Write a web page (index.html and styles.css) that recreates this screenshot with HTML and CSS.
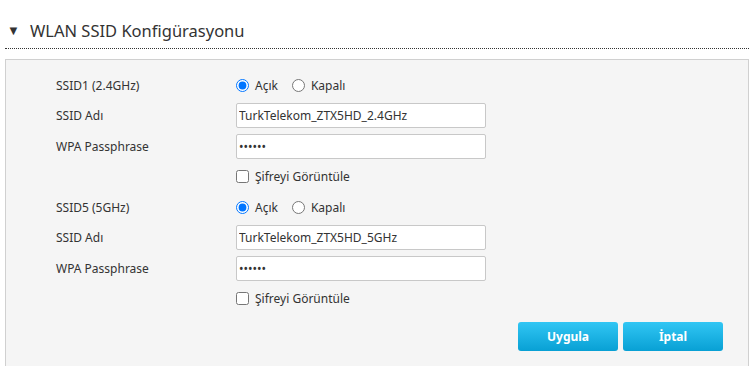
FILE: index.html
```html
<!DOCTYPE html>
<html lang="tr">
<head>
    <meta charset="UTF-8">
    <meta name="viewport" content="width=device-width, initial-scale=1.0">
    <title>WLAN SSID Konfigürasyonu</title>
    <link rel="stylesheet" href="styles.css">
</head>
<body>
    <div class="wlan-page">
        <h2 class="wlan-title"><span class="wlan-arrow">&#9660;</span>WLAN SSID Konfigürasyonu</h2>
        <form class="wlan-panel">
            <div class="wlan-row">
                <label class="wlan-label">SSID1 (2.4GHz)</label>
                <div class="wlan-field">
                    <label class="wlan-radio"><input type="radio" name="ssid1" checked>Açık</label>
                    <label class="wlan-radio"><input type="radio" name="ssid1">Kapalı</label>
                </div>
            </div>
            <div class="wlan-row">
                <label class="wlan-label" for="ssidName1">SSID Adı</label>
                <div class="wlan-field"><input class="wlan-input" id="ssidName1" type="text" value="TurkTelekom_ZTX5HD_2.4GHz"></div>
            </div>
            <div class="wlan-row">
                <label class="wlan-label" for="pass1">WPA Passphrase</label>
                <div class="wlan-field"><input class="wlan-input" id="pass1" type="password" value="123456"></div>
            </div>
            <div class="wlan-row">
                <span class="wlan-label"></span>
                <div class="wlan-field"><label class="wlan-check"><input type="checkbox">Şifreyi Görüntüle</label></div>
            </div>

            <div class="wlan-row">
                <label class="wlan-label">SSID5 (5GHz)</label>
                <div class="wlan-field">
                    <label class="wlan-radio"><input type="radio" name="ssid5" checked>Açık</label>
                    <label class="wlan-radio"><input type="radio" name="ssid5">Kapalı</label>
                </div>
            </div>
            <div class="wlan-row">
                <label class="wlan-label" for="ssidName5">SSID Adı</label>
                <div class="wlan-field"><input class="wlan-input" id="ssidName5" type="text" value="TurkTelekom_ZTX5HD_5GHz"></div>
            </div>
            <div class="wlan-row">
                <label class="wlan-label" for="pass5">WPA Passphrase</label>
                <div class="wlan-field"><input class="wlan-input" id="pass5" type="password" value="123456"></div>
            </div>
            <div class="wlan-row">
                <span class="wlan-label"></span>
                <div class="wlan-field"><label class="wlan-check"><input type="checkbox">Şifreyi Görüntüle</label></div>
            </div>

            <div class="wlan-buttons">
                <button type="button" class="wlan-btn">Uygula</button>
                <button type="button" class="wlan-btn">İptal</button>
            </div>
        </form>
    </div>
</body>
</html>
```

FILE: styles.css
```css
body {
    margin: 0;
    background-color: #fff;
    color: #333;
    font-family: "Noto Sans", "Open Sans", sans-serif;
    font-size: 12px;
    overflow: hidden;
}
.wlan-page {
    margin: 0 2px 0 5px;
}
.wlan-title {
    margin: 0;
    padding: 19px 0 6px 2px;
    border-bottom: 1px dotted #333;
    font-size: 16.5px;
    font-weight: normal;
    line-height: 23px;
    color: #333;
}
.wlan-arrow {
    display: inline-block;
    width: 23px;
    font-size: 13px;
    vertical-align: top;
}
.wlan-panel {
    box-sizing: border-box;
    height: 307px;
    margin-top: 10px;
    padding: 10px 25px 0 50px;
    background-color: #f5f5f5;
    border: 1px solid #d0d0d0;
    border-bottom: 0;
}
.wlan-row {
    display: flex;
    align-items: center;
    height: 30.5px;
}
.wlan-label {
    width: 180px;
    flex-shrink: 0;
}
.wlan-field {
    display: flex;
    align-items: center;
}
.wlan-radio,
.wlan-check {
    display: flex;
    align-items: center;
    margin-right: 14px;
}
.wlan-radio input,
.wlan-check input {
    margin: 0 6px 0 0;
    width: 13px;
    height: 13px;
}
.wlan-input {
    box-sizing: border-box;
    width: 250px;
    height: 25px;
    padding: 0 2px;
    border: 1px solid #c8c8c8;
    border-radius: 2px;
    background: #fff;
    color: #333;
    font-family: inherit;
    font-size: 12px;
}
.wlan-buttons {
    display: flex;
    justify-content: flex-end;
    gap: 5px;
    margin-top: 8px;
}
.wlan-btn {
    width: 100px;
    height: 29px;
    border: 0;
    border-radius: 3px;
    background: linear-gradient(#31c6f4, #08a0d4);
    color: #fff;
    font-family: inherit;
    font-size: 12px;
    font-weight: bold;
    cursor: pointer;
}
```
